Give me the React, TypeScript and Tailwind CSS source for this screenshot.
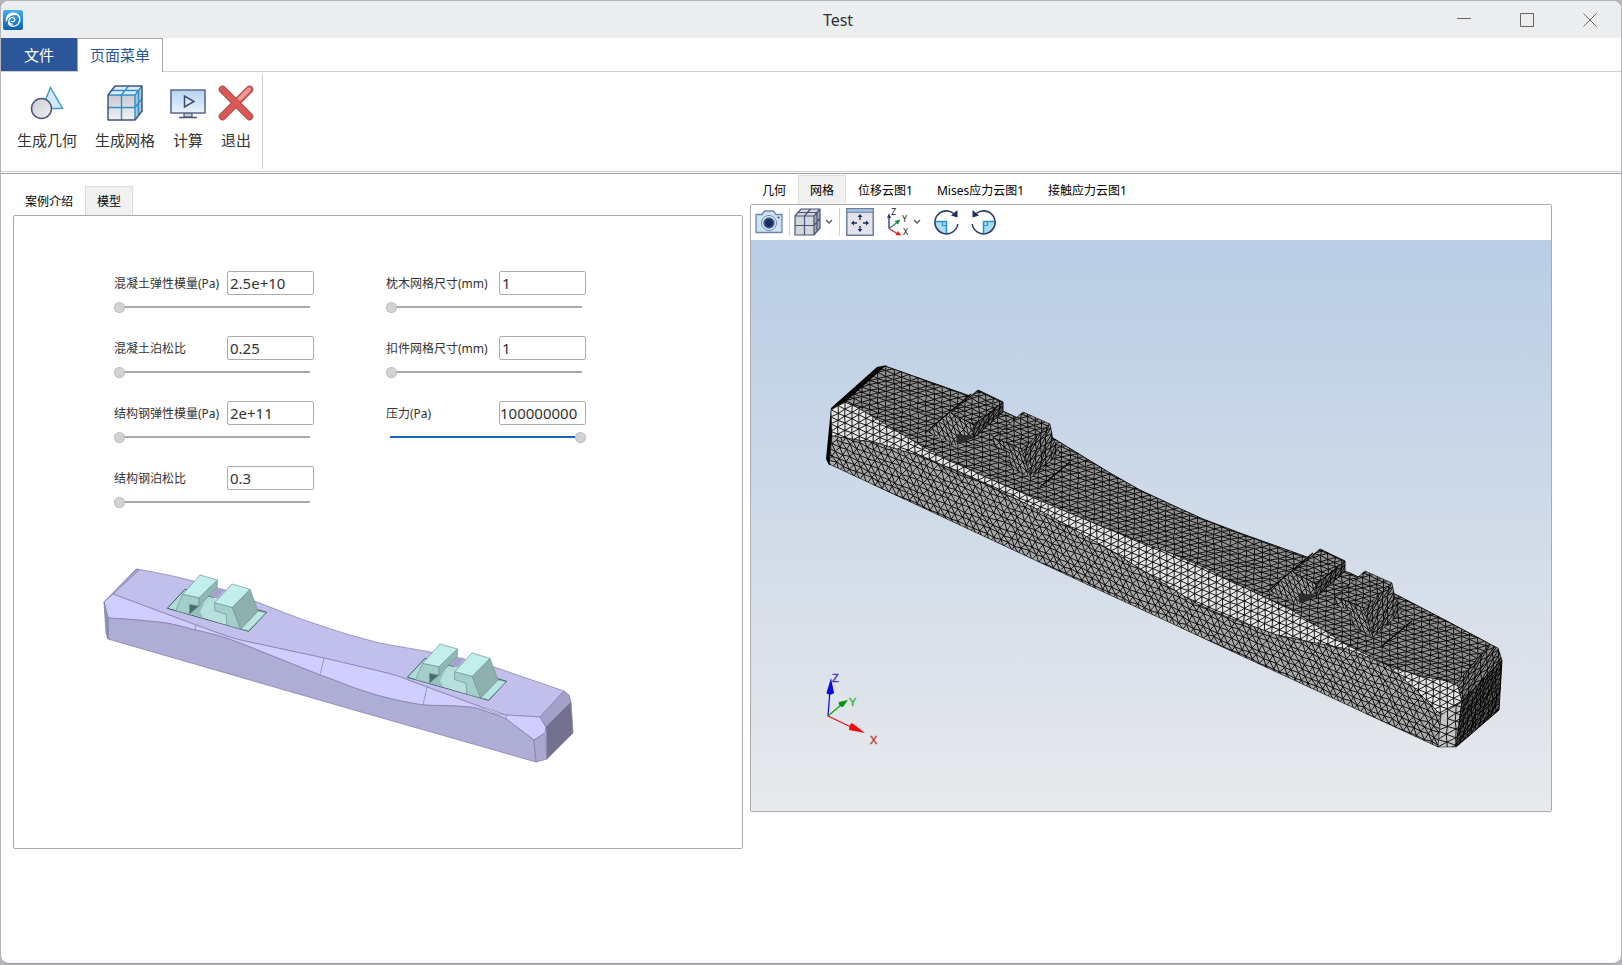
import { useState, type ReactNode } from "react";

type Point = [number, number];

type Field = { id: string; label: string; value: string; slider: number };

const materialFields: Field[] = [
  { id: "concrete-modulus", label: "混凝土弹性模量(Pa)", value: "2.5e+10", slider: 0 },
  { id: "concrete-poisson", label: "混凝土泊松比", value: "0.25", slider: 0 },
  { id: "steel-modulus", label: "结构钢弹性模量(Pa)", value: "2e+11", slider: 0 },
  { id: "steel-poisson", label: "结构钢泊松比", value: "0.3", slider: 0 },
];

const meshFields: Field[] = [
  { id: "sleeper-size", label: "枕木网格尺寸(mm)", value: "1", slider: 0 },
  { id: "fastener-size", label: "扣件网格尺寸(mm)", value: "1", slider: 0 },
  { id: "pressure", label: "压力(Pa)", value: "100000000", slider: 100 },
];

const viewTabs = ["几何", "网格", "位移云图1", "Mises应力云图1", "接触应力云图1"];

/* ---------- icons ---------- */

function LogoIcon() {
  return (
    <svg width="20" height="20" viewBox="0 0 20 20" aria-hidden="true">
      <defs>
        <linearGradient id="logo" x1="0" y1="0" x2="0" y2="1">
          <stop offset="0" stopColor="#45b0f0" />
          <stop offset="1" stopColor="#0b5fb0" />
        </linearGradient>
      </defs>
      <rect width="20" height="20" rx="2" fill="url(#logo)" />
      <path
        d="M3.5 10.5C3.200 6 6.300 3.300 10.200 3.300c3.800 0 6.600 2.700 6.600 6.300 0 3.800-2.900 6.700-6.600 6.700-2.600 0-4.700-1.600-4.700-4.100"
        fill="none"
        stroke="#fff"
        strokeWidth="1.4"
        strokeLinecap="round"
      />
      <path d="M8.500 11.300c1.500 1 3.300 0 3.300-1.500 0-1.400-1.100-2.300-2.500-2.300-1.900 0-3.300 1.500-3.300 3.400 0 2 1.500 3.300 3.500 3.300" fill="none" stroke="#fff" strokeWidth="1.2" strokeLinecap="round" />
      <path d="M2.900 11.500C2.300 6.500 5.500 2.800 10.200 2.800c2.900 0 5.200 1.400 6.300 3.900-2-1.700-4.700-2-7.200-1.200-3.200.900-5.300 3-6.400 6z" fill="#fff" />
    </svg>
  );
}

function GeometryIcon() {
  return (
    <svg width="36" height="36" viewBox="0 0 36 36" aria-hidden="true">
      <defs>
        <linearGradient id="ball" x1="0" y1="0" x2="1" y2="1">
          <stop offset="0" stopColor="#c9ccd3" />
          <stop offset="1" stopColor="#f0f0f3" />
        </linearGradient>
      </defs>
      <path d="M21.5 2.5 33.5 23.5H13z" fill="#d3e9fa" stroke="#4a97cf" strokeWidth="1.5" />
      <circle cx="12.5" cy="23.5" r="10" fill="url(#ball)" stroke="#4a587c" strokeWidth="1.5" />
    </svg>
  );
}

function MeshCubeIcon() {
  return (
    <svg width="36" height="36" viewBox="0 0 36 36" aria-hidden="true">
      <defs>
        <linearGradient id="cube" x1="0" y1="0" x2="0" y2="1">
          <stop offset="0" stopColor="#c6c9d1" />
          <stop offset="1" stopColor="#f1f2f5" />
        </linearGradient>
      </defs>
      <path d="M1 10 8 1h27l-7 9z" fill="#dcedf9" />
      <path d="M28 10l7-9v25l-7 9z" fill="#a9c5df" />
      <path d="M1 10h27v25H1z" fill="url(#cube)" />
      <path d="M14.5 35V10l7-9M1 22.5h27l7-9M4.5 5.500h27V30M1 10h27l7-9M28 10v25" fill="none" stroke="#2f8fca" strokeWidth="1.4" />
      <path d="M1 10 8 1h27v25l-7 9H1z" fill="none" stroke="#46547a" strokeWidth="1.5" strokeLinejoin="round" />
    </svg>
  );
}

function ComputeIcon() {
  return (
    <svg width="36" height="36" viewBox="0 0 36 36" aria-hidden="true">
      <defs>
        <linearGradient id="screen" x1="0" y1="0" x2="0" y2="1">
          <stop offset="0" stopColor="#b4d4f0" />
          <stop offset="1" stopColor="#e9f3fb" />
        </linearGradient>
      </defs>
      <path d="M14 28h8v4h-8z" fill="#c8ccd4" stroke="#46547a" strokeWidth="1.2" />
      <path d="M9 32.5h18" stroke="#46547a" strokeWidth="1.6" />
      <path d="M1 5h34v23H1z" fill="url(#screen)" stroke="#5b6a8c" strokeWidth="1.6" />
      <path d="M14.5 11v11l9.500-5.500z" fill="#dcebf7" stroke="#3a4a72" strokeWidth="1.5" />
    </svg>
  );
}

function ExitIcon() {
  return (
    <svg width="36" height="36" viewBox="0 0 36 36" aria-hidden="true">
      <path d="M4.5 4.5l27 27M31.5 4.5l-27 27" stroke="#a8484b" strokeWidth="7.5" strokeLinecap="round" />
      <path d="M4.5 4.5l27 27M31.5 4.5l-27 27" stroke="#dc5855" strokeWidth="5.5" strokeLinecap="round" />
      <path d="M31 4.500l-9 9" stroke="#ec9a96" strokeWidth="4" strokeLinecap="round" />
    </svg>
  );
}

function CameraIcon() {
  return (
    <svg width="28" height="24" viewBox="0 0 28 24" aria-hidden="true">
      <path d="M1 4.5h6L9.500 1h9L21 4.500h6v18H1z" fill="#cfe1f2" stroke="#6d86ad" strokeWidth="1.3" strokeLinejoin="round" />
      <circle cx="14" cy="13" r="7.5" fill="#e9f1f9" stroke="#6d86ad" />
      <circle cx="14" cy="13" r="5" fill="#1d2f5e" stroke="#45669b" strokeWidth="1.6" />
      <circle cx="23.5" cy="7.5" r="1" fill="#33426b" />
    </svg>
  );
}

function ViewCubeIcon() {
  return (
    <svg width="28" height="28" viewBox="0 0 28 28" aria-hidden="true">
      <path d="M1 8 7 1h19v19l-6 7H1z" fill="#d5d7e0" />
      <path d="M20 8l6-7v19l-6 7z" fill="#a7aabb" />
      <path d="M1 8 7 1h19v19l-6 7H1zM1 8h19l6-7M20 8v19M10.5 27V8l6-7M1 17.500h19l6-7M4 4.500h19v19" fill="none" stroke="#4a5272" strokeWidth="1.2" />
    </svg>
  );
}

function FitIcon() {
  return (
    <svg width="28" height="28" viewBox="0 0 28 28" aria-hidden="true">
      <path d="M.8.8h26.400v26.400H.8z" fill="#e2e4ea" stroke="#6b7c9d" strokeWidth="1.5" />
      <path d="M1.5 1.5h25V4h-25z" fill="#9cc3e6" />
      <path d="M.8 4.300h26.400" stroke="#6b7c9d" />
      <path d="M14 8v4M14 18v4M7 15h4M17 15h4" stroke="#1d2f5e" strokeWidth="1.3" />
      <path d="M14 6l2.500 3h-5zM14 24l2.500-3h-5zM5 15l3-2.500v5zM23 15l-3-2.500v5z" fill="#1d2f5e" />
    </svg>
  );
}

function AxesIcon() {
  return (
    <svg width="24" height="30" viewBox="0 0 24 30" className="overflow-visible" aria-hidden="true">
      <path d="M3 21.5V9" stroke="#3f4da0" strokeWidth="1.5" />
      <path d="M3 6 5 11H1z" fill="#2c3a8c" />
      <path d="M3 21.5l8-6" stroke="#1e8a44" strokeWidth="1.3" />
      <path d="M14.5 12.5 12 17.5 8.500 14z" fill="#1e8a44" />
      <path d="M3 21.5l8 5" stroke="#e02626" strokeWidth="1.3" />
      <path d="M15.5 28.500l-6-.5 2.500-4z" fill="#e02626" />
      <g fill="#222" fontSize="9" fontFamily="Noto Sans, sans-serif">
        <text x="5" y="8">Z</text>
        <text x="16" y="15">Y</text>
        <text x="17" y="28">X</text>
      </g>
    </svg>
  );
}

function RotateIcon({ flipped = false }: { flipped?: boolean }) {
  return (
    <svg width="26" height="26" viewBox="0 0 26 26" className={flipped ? "-scale-x-100" : ""} aria-hidden="true">
      <path d="M1.5 12.500h12v12C7 24.500 1.500 20 1.500 12.500z" fill="#a9dcf5" />
      <path d="M1.5 12.500h12v12" fill="none" stroke="#2b93cf" strokeWidth="1.5" />
      <path d="M9.5 12.500v4h4" fill="none" stroke="#2b93cf" strokeWidth="1.2" />
      <path d="M20.5 4.300A11.500 11.500 0 1 0 24.800 15" fill="none" stroke="#33426b" strokeWidth="1.6" />
      <path d="M24.5 1v7.500L18 6.500z" fill="#1d2f5e" />
    </svg>
  );
}

function Chevron() {
  return (
    <svg width="8" height="6" viewBox="0 0 8 6" aria-hidden="true">
      <path d="M1 1l3 3 3-3" fill="none" stroke="#55595f" strokeWidth="1.3" />
    </svg>
  );
}

/* ---------- shaded model on the left ---------- */

function ShadedFastener({ x, y }: { x: number; y: number }) {
  return (
    <g transform={`translate(${x} ${y}) scale(0.3333)`} stroke="#6f8f96" strokeWidth="2" strokeLinejoin="round">
      <path d="M232 175 285 118 530 187 476 244z" fill="#aedcd8" stroke="#3c5558" strokeWidth="3" />
      <path d="M300 192 375 140 410 150 408 224z" fill="#b5e0dc" stroke="none" />
      <path d="M300 192 327 168 345 156 330 185 340 203z" fill="#93bfbb" stroke="none" />
      <path d="M360 139 383 114 405 118 382 145z" fill="#a5a3ce" stroke="none" />
      <path d="M298 163 327 168 298 193z" fill="#4d6a68" />
      <path d="M278 133 327 143V168L298 163V193L257 182z" fill="#a3cfcb" />
      <path d="M382 90V113L327 168V143z" fill="#8fb8b4" />
      <path d="M330 75 382 90 327 143 278 133z" fill="#c2efeb" />
      <path d="M504 183 528 188 476 242 452 237z" fill="#b9e6e2" />
      <path d="M374 158 427 172 452 237 411 226 408 193 374 182z" fill="#a3cfcb" />
      <path d="M480 118 504 183 452 237 427 172z" fill="#8fb1ae" />
      <path d="M426 102 480 118 427 172 374 158z" fill="#c2efeb" />
    </g>
  );
}

function ShadedModel() {
  return (
    <svg viewBox="100 560 480 210" className="block h-[210px] w-[480px]" role="img" aria-label="轨枕几何模型">
      <g stroke="#7d7ba5" strokeWidth="0.7" strokeLinejoin="round">
        <path
          d="M113 594 137 569C160 573 178 577 193 581 220 588 240 595 257 602 275 609 290 615 307 621 325 627 340 632 350 635 365 639 375 642 380 643 400 647 415 649 430 652 455 657 475 662 497 668L564 691 540 717 506 715 473 704 427 687C410 681 400 676 387 673L324 658 240 640C225 636 210 630 196 625z"
          fill="#c1c0ec"
        />
        <path d="M104 602 136 569 139 570 113 594z" fill="#a5a3cc" />
        <path
          d="M104 602 113 594 196 625C210 630 225 636 240 640L324 658 387 673C400 676 410 681 427 687L473 704C485 709 495 714 506 715L540 717 546 727 545 733 534 740 506 719C500 716 495 714 490 713 480 709 475 707 467 707 450 705 440 706 423 705 405 702 395 700 380 696 355 689 340 682 320 675L240 643C225 637 210 633 195 630 180 626 170 623 157 622 140 620 125 619 108 618z"
          fill="#cfceff"
        />
        <path
          d="M108 618C125 619 140 620 157 622 170 623 180 626 195 630 210 633 225 637 240 643L320 675C340 682 355 689 380 696 395 700 405 702 423 705 440 706 450 705 467 707 475 707 480 709 490 713 495 714 500 716 506 719L534 740 536 762 340 706 108 639z"
          fill="#aeadd5"
        />
        <path d="M104 602 108 618V639L106 633z" fill="#9593bd" />
        <path d="M534 740 545 733 547 759 536 762z" fill="#a9a8d0" />
        <path d="M540 717 564 691 569 695 571 702 546 727z" fill="#a3a1c9" />
        <path d="M546 727 571 702 573 733 547 759z" fill="#73718d" />
        <path d="M196 625 195 630M324 658 320 675M427 687 423 705M506 715V719" fill="none" />
      </g>
      <ShadedFastener x={90} y={550} />
      <ShadedFastener x={330} y={619} />
    </svg>
  );
}

/* ---------- meshed model on the right ---------- */

// vertical extent of a polygon at a given x
function span(poly: Point[], x: number): Point | null {
  const ys: number[] = [];
  poly.forEach(([x1, y1], i) => {
    const [x2, y2] = poly[(i + 1) % poly.length];
    if (x1 !== x2 && x >= Math.min(x1, x2) && x <= Math.max(x1, x2)) {
      ys.push(y1 + ((x - x1) / (x2 - x1)) * (y2 - y1));
    }
  });
  return ys.length ? [Math.min(...ys), Math.max(...ys)] : null;
}

type Cell = { dx: number; rise: number; dy: number; jitter?: number; stagger?: boolean };

// triangulated lattice covering a polygon, every node moved a little
function lattice(poly: Point[], { dx, rise, dy, jitter = 1.6, stagger = false }: Cell) {
  const xs = poly.map((p) => p[0]);
  const minX = Math.min(...xs);
  const maxX = Math.max(...xs);
  const originY = poly[0][1];
  const node = (i: number, j: number) => {
    const a = Math.sin(i * 12.9898 + j * 78.233) * 43758.5453;
    const b = Math.sin(i * 39.425 + j * 11.135) * 24634.6345;
    const col = stagger && j % 2 !== 0 ? i + 0.5 : i;
    const px = minX + col * dx + (a - Math.floor(a) - 0.5) * jitter;
    const py = originY + col * rise + j * dy + (b - Math.floor(b) - 0.5) * jitter;
    return `${px.toFixed(1)} ${py.toFixed(1)}`;
  };
  let d = "";
  for (let i = -1; minX + i * dx < maxX + dx; i++) {
    const x = Math.min(maxX, Math.max(minX, minX + i * dx));
    const range = span(poly, x);
    if (!range) continue;
    const base = originY + i * rise;
    const from = Math.floor((range[0] - base) / dy) - 3;
    const to = Math.ceil((range[1] - base) / dy) + 3;
    for (let j = from; j <= to; j++) {
      d += `M${node(i, j + 1)}L${node(i, j)}L${node(i + 1, j)}`;
      if (!stagger) d += `M${node(i, j + 1)}L${node(i + 1, j)}`;
      else if (j % 2 === 0) d += `M${node(i, j)}L${node(i - 1, j + 1)}`;
      else d += `M${node(i, j)}L${node(i + 1, j + 1)}`;
    }
  }
  return d;
}

type FaceProps = { id: string; points: Point[]; fill: string; cell: Cell; line?: number; edge?: number };

function MeshFace({ id, points, fill, cell, line = 0.9, edge = 0.9 }: FaceProps) {
  const outline = points.map((p) => p.join(",")).join(" ");
  return (
    <g>
      <clipPath id={id}>
        <polygon points={outline} />
      </clipPath>
      <polygon points={outline} fill={fill} stroke="#000" strokeWidth={edge} />
      <path d={lattice(points, cell)} clipPath={`url(#${id})`} fill="none" stroke="#000" strokeWidth={line} />
    </g>
  );
}

const backEdge: Point[] = [
  [885, 366], [970, 396], [1018, 418], [1053, 438], [1110, 473], [1140, 490], [1170, 504],
  [1203, 519], [1240, 533], [1307, 557], [1350, 573], [1397, 595], [1445, 620], [1490, 644],
];
const ridgeEdge: Point[] = [
  [846, 401], [885, 424], [923, 447], [983, 476], [1043, 502], [1110, 530], [1170, 553],
  [1205, 568], [1243, 587], [1293, 611], [1347, 645], [1393, 668], [1425, 677], [1457, 683],
];
const frontEdge: Point[] = [
  [832, 436], [877, 443], [923, 457], [983, 483], [1043, 512], [1110, 550], [1163, 583],
  [1195, 603], [1227, 617], [1277, 635], [1310, 642], [1347, 649], [1387, 665], [1413, 687], [1441, 715],
];

const topFace: Point[] = [...backEdge, ...[...ridgeEdge].reverse()];
const bandFace: Point[] = [[831, 410], ...ridgeEdge, [1462, 701], ...[...frontEdge].reverse()];
const sideFace: Point[] = [...frontEdge, [1438, 747], [1160, 618], [1097, 589], [829, 464]];

const smallCell: Cell = { dx: 7, rise: 3, dy: 5 };
const frontCell: Cell = { dx: 6, rise: 5, dy: 6, stagger: true };
const steepCell: Cell = { dx: 5, rise: -3, dy: 7 };

function MeshedFastener({ id, x, y }: { id: string; x: number; y: number }) {
  return (
    <g transform={`translate(${x} ${y})`}>
      <path d="M925 433 971 394M1040 487 1070 462" fill="none" stroke="#000" strokeWidth="1.3" />
      <MeshFace id={`${id}-af`} points={[[952, 411], [974, 424], [973, 432], [957, 446], [927, 432]]} fill="#a0a0a0" cell={frontCell} edge={0} />
      <path d="M956 434 973 436 973 438 957 445z" fill="#2c2c2c" />
      <MeshFace id={`${id}-as`} points={[[1003, 402], [1003, 412], [974, 438], [974, 425]]} fill="#6a6a6a" cell={steepCell} />
      <MeshFace id={`${id}-at`} points={[[978, 390], [1003, 402], [974, 425], [951, 413]]} fill="#929292" cell={smallCell} />
      <MeshFace id={`${id}-bf`} points={[[993, 437], [1022, 449], [1031, 478], [1011, 468], [1009, 452], [994, 446]]} fill="#999" cell={frontCell} edge={0.4} />
      <MeshFace id={`${id}-bs`} points={[[1050, 424], [1053, 439], [1060, 453], [1031, 478], [1021, 449]]} fill="#8a8a8a" cell={steepCell} edge={0.5} />
      <MeshFace id={`${id}-bt`} points={[[1023, 412], [1050, 424], [1022, 449], [993, 438]]} fill="#909090" cell={smallCell} edge={0.6} />
    </g>
  );
}

function MeshViewport() {
  return (
    <svg
      viewBox="751 240 800 571"
      className="block h-auto w-full bg-linear-to-b from-[#b9cde5] to-[#e8e9ec]"
      role="img"
      aria-label="轨枕网格模型"
    >
      <path d="M887 365 877 367 831 408 826 459 829 465 833 465 833 436 832 412 848 400z" fill="#000" />
      <MeshFace id="top" points={topFace} fill="#919191" cell={{ dx: 8, rise: 3, dy: 5 }} />
      <MeshFace id="band" points={bandFace} fill="#e6e6e6" cell={{ dx: 7, rise: 3, dy: 7, jitter: 1 }} edge={0.5} />
      <MeshFace id="side" points={sideFace} fill="#a9a9a9" cell={{ dx: 7, rise: 3, dy: 6, jitter: 2, stagger: true }} edge={0.6} />
      <MeshFace id="chamfer" points={[[1457, 683], [1490, 644], [1498, 648], [1502, 660], [1462, 701]]} fill="#858585" cell={{ dx: 6, rise: -4, dy: 6 }} edge={0.6} />
      <MeshFace id="corner" points={[[1441, 715], [1462, 701], [1456, 747], [1438, 747]]} fill="#c4c4c4" cell={{ dx: 9, rise: 3, dy: 8 }} edge={0.5} />
      <MeshFace id="end" points={[[1462, 701], [1502, 660], [1499, 710], [1456, 747]]} fill="#5c5c5c" cell={{ dx: 4, rise: -3, dy: 5 }} />
      <MeshedFastener id="f1" x={0} y={0} />
      <MeshedFastener id="f2" x={342} y={159} />

      <g strokeWidth="1.3">
        <path d="M828 716 830 690" stroke="#1414d8" />
        <path d="M831 678 834 693C832 695 828 695 826.500 693z" fill="#0a0ae0" />
        <path d="M828 716 841 705" stroke="#12a012" />
        <path d="M848 700 843 707C840 707 838 704 839 702z" fill="#0d8f14" />
        <path d="M828 716 851 727" stroke="#e01010" />
        <path d="M865 733 849 730C849 727 850 724 852 723z" fill="#f00a0a" />
      </g>
      <g fontFamily="Liberation Sans, sans-serif" fontSize="11" strokeWidth="0.4">
        <text x="832" y="682" fill="#3232c8" stroke="#3232c8">Z</text>
        <text x="849" y="706" fill="#32b432" stroke="#32b432">Y</text>
        <text x="870" y="744" fill="#c03a3a" stroke="#c03a3a">X</text>
      </g>
    </svg>
  );
}

/* ---------- page ---------- */

function RibbonButton({ label, children }: { label: string; children: ReactNode }) {
  return (
    <button type="button" className="flex flex-col items-center gap-[9px] text-[15px] leading-5 text-[#333]">
      <span className="-mx-[3px]">{children}</span>
      {label}
    </button>
  );
}

function TabButton({ label, active, onClick }: { label: string; active: boolean; onClick: () => void }) {
  return (
    <button
      type="button"
      role="tab"
      aria-selected={active}
      onClick={onClick}
      className={`h-[29px] border border-b-0 px-[11px] pt-0.5 text-xs text-black ${
        active ? "border-[#dcdcdc] bg-[#f1f1f1]" : "border-transparent"
      }`}
    >
      {label}
    </button>
  );
}

function ParameterField({ field }: { field: Field }) {
  const full = field.slider === 100;
  return (
    <div>
      <div className="flex h-6 items-center justify-between">
        <label htmlFor={field.id} className="pt-0.5 text-xs whitespace-nowrap text-[#333]">
          {field.label}
        </label>
        <input
          id={field.id}
          type="text"
          defaultValue={field.value}
          className={`h-6 w-[87px] rounded-xs border border-[#ababab] bg-white text-[15px] text-[#333] outline-none ${
            full ? "pl-0" : "pl-0.5"
          }`}
        />
      </div>
      <input
        type="range"
        aria-label={field.label}
        defaultValue={field.slider}
        className={`mt-1 block h-4 w-full appearance-none bg-[length:192px_2px] bg-[position:4px_center] bg-no-repeat [&::-webkit-slider-thumb]:size-[11px] [&::-webkit-slider-thumb]:appearance-none [&::-webkit-slider-thumb]:rounded-full [&::-webkit-slider-thumb]:border [&::-webkit-slider-thumb]:border-dotted [&::-webkit-slider-thumb]:border-[#a8a8a8] [&::-webkit-slider-thumb]:bg-[#d2d2d2] ${
          full
            ? "bg-[linear-gradient(#1668b8,#1668b8)]"
            : "bg-[linear-gradient(#a8a8a8,#a8a8a8)]"
        }`}
      />
    </div>
  );
}

export default function App() {
  const [leftTab, setLeftTab] = useState("模型");
  const [viewTab, setViewTab] = useState("网格");

  return (
    <div className="flex min-h-screen flex-col bg-[#b4b6b9] p-px font-['Noto_Sans','Noto_Sans_CJK_SC',sans-serif]">
      <div className="flex flex-1 flex-col overflow-hidden rounded-lg border-b border-[#999] bg-white">
        <header className="grid h-[37px] grid-cols-[1fr_auto_1fr] items-center bg-[#ecedef] pl-0.5">
          <LogoIcon />
          <h1 className="pl-[52px] text-base text-[#333]">Test</h1>
          <div className="flex items-center justify-end gap-[49px] pr-6 text-[#666]">
            <button type="button" aria-label="最小化">
              <svg width="14" height="14" viewBox="0 0 14 14">
                <path d="M0 5.500h14" stroke="currentColor" />
              </svg>
            </button>
            <button type="button" aria-label="最大化">
              <svg width="14" height="14" viewBox="0 0 14 14">
                <path d="M.5.5h13v13H.5z" fill="none" stroke="currentColor" />
              </svg>
            </button>
            <button type="button" aria-label="关闭">
              <svg width="14" height="14" viewBox="0 0 14 14">
                <path d="M.5.5l13 13M13.5.5l-13 13" stroke="currentColor" />
              </svg>
            </button>
          </div>
        </header>

        <nav className="flex h-[34px] border-b border-[#d0d0d0] text-[15px]">
          <button type="button" className="w-[76px] bg-[#2b579a] pt-0.5 text-white">
            文件
          </button>
          <button type="button" className="-mb-px w-[86px] border border-b-0 border-[#a6a6a6] bg-white text-[#2b579a]">
            页面菜单
          </button>
        </nav>

        <div className="flex h-[100px] border-b border-[#d0d0d0] py-0.5">
          <div className="flex items-start gap-[18px] border-r border-[#d0d0d0] pt-[11px] pr-[11px] pl-4">
            <RibbonButton label="生成几何">
              <GeometryIcon />
            </RibbonButton>
            <RibbonButton label="生成网格">
              <MeshCubeIcon />
            </RibbonButton>
            <RibbonButton label="计算">
              <ComputeIcon />
            </RibbonButton>
            <RibbonButton label="退出">
              <ExitIcon />
            </RibbonButton>
          </div>
        </div>

        <main className="mt-px flex flex-1 items-start gap-[7px] border-t border-[#a0a0a0] pr-[69px] pl-3">
          <section className="min-w-0 flex-[730] pt-3">
            <div role="tablist" className="flex">
              {["案例介绍", "模型"].map((tab) => (
                <TabButton key={tab} label={tab} active={tab === leftTab} onClick={() => setLeftTab(tab)} />
              ))}
            </div>
            <div className="rounded-xs border border-[#ababab] pt-[55px] pb-[78px]">
              <form className="flex gap-[72px] pl-[100px]">
                <div className="flex w-[200px] flex-col gap-[21px]">
                  {materialFields.map((field) => (
                    <ParameterField key={field.id} field={field} />
                  ))}
                </div>
                <div className="flex w-[200px] flex-col gap-[21px]">
                  {meshFields.map((field) => (
                    <ParameterField key={field.id} field={field} />
                  ))}
                </div>
              </form>
              <div className="mt-[50px] pl-[86px]">
                <ShadedModel />
              </div>
            </div>
          </section>

          <section className="min-w-0 flex-[802] pt-px">
            <div role="tablist" className="flex">
              {viewTabs.map((tab) => (
                <TabButton key={tab} label={tab} active={tab === viewTab} onClick={() => setViewTab(tab)} />
              ))}
            </div>
            <div className="overflow-hidden rounded-xs border border-[#ababab]">
              <div className="flex h-[35px] items-center pb-0.5 pl-1">
                <button type="button" aria-label="截图">
                  <CameraIcon />
                </button>
                <span className="mr-1 ml-1.5 h-7 w-px bg-[#d0d0d0]" />
                <button type="button" aria-label="显示模式" className="flex items-center gap-[3px]">
                  <ViewCubeIcon />
                  <Chevron />
                </button>
                <span className="mx-1.5 h-7 w-px bg-[#d0d0d0]" />
                <button type="button" aria-label="适应窗口">
                  <FitIcon />
                </button>
                <button type="button" aria-label="视角" className="ml-3 flex items-center gap-[3px]">
                  <AxesIcon />
                  <Chevron />
                </button>
                <button type="button" aria-label="顺时针旋转" className="ml-3">
                  <RotateIcon />
                </button>
                <button type="button" aria-label="逆时针旋转" className="ml-3">
                  <RotateIcon flipped />
                </button>
              </div>
              <MeshViewport />
            </div>
          </section>
        </main>
      </div>
    </div>
  );
}
